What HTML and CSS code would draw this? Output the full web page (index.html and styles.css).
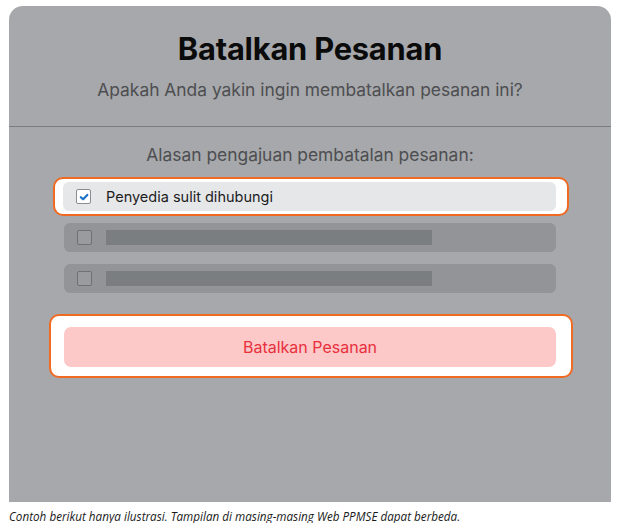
FILE: index.html
```html
<!DOCTYPE html>
<html lang="id">
  <head>
    <meta charset="UTF-8" />
    <meta name="viewport" content="width=device-width, initial-scale=1.0" />
    <title>Batalkan Pesanan</title>
    <link rel="stylesheet" href="styles.css">
  </head>
  <body>
    <div class="panel">
      <div class="panel-head">
        <h1>Batalkan Pesanan</h1>
        <p class="subtitle">Apakah Anda yakin ingin membatalkan pesanan ini?</p>
      </div>
      <div class="panel-body">
        <p class="label">Alasan pengajuan pembatalan pesanan:</p>
        <div class="reasons">
          <div class="focus-ring">
            <label class="reason reason-active">
              <span class="check check-on">
                <svg viewBox="0 0 10 10" width="10" height="10">
                  <path d="M1.8 5.2 L4.1 7.3 L8.3 2.9" fill="none" stroke="#1a74c9" stroke-width="2.2" stroke-linecap="round" stroke-linejoin="round" />
                </svg>
              </span>
              Penyedia sulit dihubungi
            </label>
          </div>
          <div class="reason reason-muted">
            <span class="check"></span>
            <span class="placeholder"></span>
          </div>
          <div class="reason reason-muted">
            <span class="check"></span>
            <span class="placeholder"></span>
          </div>
        </div>
        <div class="focus-ring focus-ring-btn">
          <button class="cancel-btn">Batalkan Pesanan</button>
        </div>
      </div>
    </div>
    <p class="caption">Contoh berikut hanya ilustrasi. Tampilan di masing-masing Web PPMSE dapat berbeda.</p>
  </body>
</html>
```

FILE: styles.css
```css
html,
body {
  margin: 0;
  padding: 0;
  background: #fff;
}
body {
  padding: 6px 16px 0 9px;
  font-family: Inter, "Noto Sans", sans-serif;
}
.panel {
  width: 602px;
  height: 496px;
  background: #a7a8ab;
  border-radius: 14px 14px 0 0;
  box-sizing: border-box;
}
.panel-head {
  text-align: center;
  padding-top: 25px;
  height: 121px;
  box-sizing: border-box;
  border-bottom: 1px solid #7b7c80;
}
h1 {
  margin: 0;
  font-size: 30.8px;
  line-height: 36px;
  font-weight: 700;
  color: #0b0b0c;
  letter-spacing: -0.2px;
}
.subtitle {
  margin: 12px 0 0;
  font-size: 17.4px;
  line-height: 22px;
  color: #4d4e51;
}
.panel-body {
  padding: 17px 0 0;
}
.label {
  margin: 0;
  text-align: center;
  font-size: 17.4px;
  line-height: 22px;
  color: #4d4e51;
}
.reasons {
  margin: 11px 0 0 44px;
  width: 516px;
  display: flex;
  flex-direction: column;
}
.focus-ring {
  background: #fff;
  border: 2px solid #f06a22;
  border-radius: 10px;
  padding: 3px 11px 3px 8px;
}
.reason {
  display: flex;
  align-items: center;
  height: 29px;
  border-radius: 6px;
  padding-left: 13px;
  gap: 15px;
  font-size: 14.5px;
  color: #1c1c1e;
}
.reason-active {
  background: #e6e7e9;
}
.reason-muted {
  margin: 12px 13px 0 11px;
  background: #939497;
  gap: 14px;
}
.focus-ring + .reason-muted {
  margin-top: 7px;
}
.check {
  width: 15px;
  height: 15px;
  box-sizing: border-box;
  border: 1px solid #6f7073;
  border-radius: 2px;
  background: #9a9b9e;
  display: flex;
  align-items: center;
  justify-content: center;
}
.check-on {
  border-color: #8b8c90;
  background: #fff;
}
.placeholder {
  width: 326px;
  height: 15px;
  background: #7b7e80;
}
.focus-ring-btn {
  margin: 21px 0 0 40px;
  width: 524px;
  padding: 11px 15px 9px 13px;
  box-sizing: border-box;
}
.cancel-btn {
  display: block;
  width: 100%;
  height: 40px;
  border: none;
  border-radius: 7px;
  background: #fcc8c8;
  color: #e8303d;
  font-family: Inter, "Noto Sans", sans-serif;
  font-size: 16px;
}
.caption {
  margin: 6px 0 0;
  font-family: "Open Sans", sans-serif;
  font-style: italic;
  font-size: 11.7px;
  color: #1a1a1a;
}
```
